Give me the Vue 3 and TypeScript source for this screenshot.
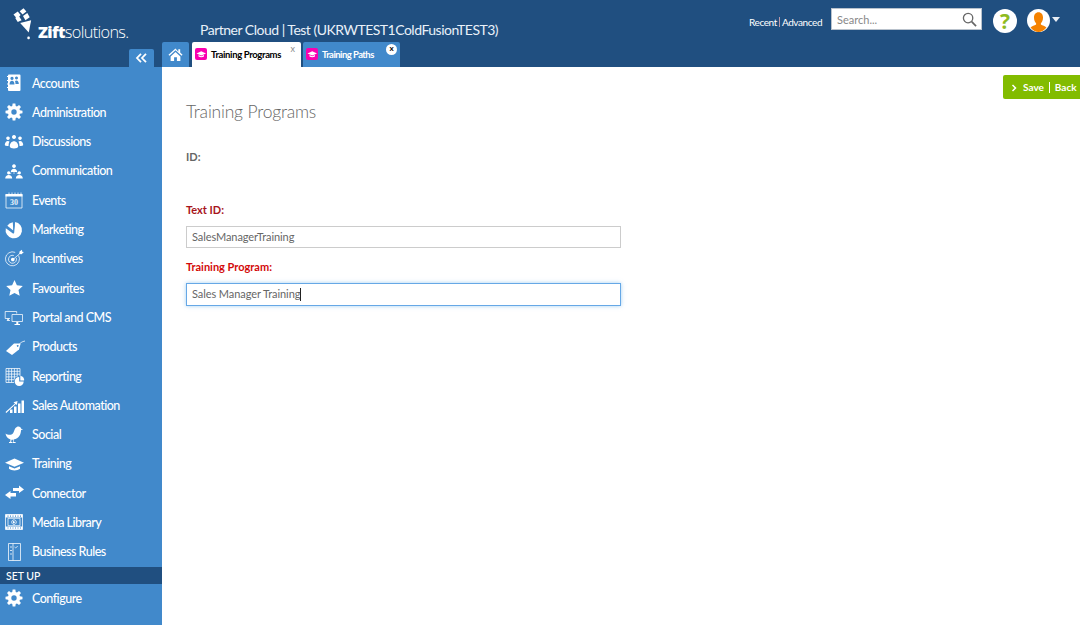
<script setup lang="ts">
interface Icon { u?: string[]; f?: string[]; s?: string[]; b?: string[]; t?: string }

function gear(cx = 10, cy = 10, ro = 8.6, ri = 6.2, hole = 2.7, n = 8): string {
  let d = ''
  const step = (Math.PI * 2) / n
  for (let i = 0; i < n; i++) {
    const a = i * step - Math.PI / 2
    const pts: [number, number][] = [
      [ri, a - step * 0.36], [ro, a - step * 0.2], [ro, a + step * 0.2], [ri, a + step * 0.36],
    ]
    pts.forEach(([r, t], k) => {
      const x = (cx + r * Math.cos(t)).toFixed(2)
      const y = (cy + r * Math.sin(t)).toFixed(2)
      d += (i === 0 && k === 0 ? 'M' : 'L') + x + ' ' + y + ' '
    })
  }
  d += `Z M${cx - hole} ${cy} a${hole} ${hole} 0 1 0 ${hole * 2} 0 a${hole} ${hole} 0 1 0 ${-hole * 2} 0 Z`
  return d
}

const icons: Record<string, Icon> = {
  accounts: {
    f: ['M5 1.500h10.500a1 1 0 0 1 1 1v14.500a1 1 0 0 1-1 1H5a1 1 0 0 1-1-1v-2H3v-1h1v-2.500H3v-1h1V8H3V7h1V4H3V3h1v-.5a1 1 0 0 1 1-1z'],
    b: ['M8 7a1.600 1.600 0 1 1 .01 0zM5.500 11.500c0-2 1-3.700 2.500-3.700s2.500 1.700 2.500 3.700zM12.500 6.500a1.500 1.500 0 1 1 .01 0zM11 8c.4-.3 1-.5 1.500-.5 1.300 0 2.300 1.500 2.300 3.500h-3.300c0-1-.1-2-.5-3z'],
  },
  gear: { f: [gear()] },
  discussions: {
    f: [
      'M10 7a2 2 0 1 1 .01 0zM5.800 14.500c0-3 1.800-5.200 4.200-5.200s4.200 2.200 4.200 5.200c0 1.300-1.900 2-4.200 2s-4.200-.7-4.200-2z',
      'M4 8a1.800 1.800 0 1 1 .01 0zM16 8a1.800 1.800 0 1 1 .01 0z',
      'M.8 13c0-2.200 1.300-4 3.100-4 .6 0 1.100.2 1.600.6C4.800 10.800 4.500 12.300 4.500 14c-2 0-3.700-.3-3.700-1zM19.200 13c0-2.200-1.300-4-3.100-4-.6 0-1.100.2-1.600.6.7 1.200 1 2.700 1 4.400 2 0 3.700-.3 3.700-1z',
    ],
  },
  communication: {
    f: [
      'M10 7a1.900 1.900 0 1 1 .01 0zM6.800 11c0-2 1.400-3.300 3.200-3.300s3.200 1.300 3.200 3.300z',
      'M4.700 13.500a1.600 1.600 0 1 1 .01 0zM1.200 17.500c0-2 1.500-3.400 3.500-3.400s3.500 1.400 3.500 3.400z',
      'M15.300 13.500a1.600 1.600 0 1 1 .01 0zM11.800 17.500c0-2 1.500-3.400 3.500-3.400s3.500 1.400 3.500 3.400z',
      'M9.700 11h.6v2h-.6zM6 12.500l1-1 .5.5-1 1zM14 12.500l-1-1-.5.5 1 1z',
    ],
  },
  events: {
    s: ['M2 4.500h16v13.500h-16z', 'M5 2.500v2M8 2.500v2M11 2.500v2M14 2.500v2M17 2.500v2'],
    f: ['M1.500 4h17v2.500h-17z'],
    b: ['M3.500 7.500h13v9h-13z'],
    t: '30',
  },
  marketing: {
    f: ['M8.800 2.300 5.500 3.500 3.300 5.700l6 4.800zM11 2a8.200 8.200 0 1 1-9.200 6.300l7.500 5.500.9-1.100z'],
    b: ['M9 12.500l1.500-10.500h.6l-1.500 11z'],
  },
  incentives: {
    s: ['M14.600 6.500a7 7 0 1 1-3.400-3.100', 'M12.200 8.800a4 4 0 1 1-2.400-2.300', 'M9 10.500 17 3.500'],
    f: ['M8.800 8.700a1.800 1.800 0 1 0 .01 0zM15.500 2.500 18 .8l.2 2 1.700.3-2.300 2.200-2.300-.3z'],
  },
  star: { f: ['M10.500 2l2.400 5.300 5.900.7-4.300 4 1.200 5.800-5.200-2.900-5.200 2.900 1.200-5.800-4.300-4 5.900-.7z'] },
  portal: {
    s: ['M1.200 4.500h11.500v2M1.200 4.500v7H6', 'M8 7.500h10.500v7H8z', 'M2.800 13.500h3.200'],
    f: ['M12.300 15h2v2h-2zM10.500 17h5.500v1h-5.500z', 'M3.300 11.500h1.500v2H3.300z'],
  },
  products: {
    f: ['M10 6.500h6l.5.5-1.500 5.500-7 5.500L2 14z'],
    b: ['M13.700 8a.9.9 0 1 1-.01 0z'],
    s: ['M14 8.500C16 6 18 4.500 21 4'],
  },
  reporting: {
    s: ['M2 2.500h14v14H2zM2 5.300h14M2 8.100h14M2 10.900h14M2 13.700h14M4.800 2.500v14M7.600 2.500v14M10.400 2.500v14M13.200 2.500v14'],
    u: ['M15.500 10a5.500 5.500 0 1 0 .01 0z'],
    f: ['M15.200 11a4.500 4.500 0 1 0 4.500 4.500h-4.500z', 'M16.300 10a3.800 3.800 0 0 1 3.800 4.600h-3.800z'],
  },
  sales: {
    f: ['M6 14.500h2.500V18H6zM10 11.500h2.500V18H10zM14 8.500h2.500V18H14zM17.500 5.500h2.500V18h-2.500z', 'M1.500 17 11 8.500 9.500 7.300 13.500 6l-.6 4-1.100-1L2.300 18z'],
  },
  social: {
    f: ['M14.500 1.500c1.400 0 2.500 1 2.600 2.200l2 .6-2 .8c-.3 4.300-2 8.500-7.500 9.500l.5 2.400h1.500v1H8v-1h1.500L9 14.700H7.500l-.3 2.300h1.300v1H5v-1h1.200l.3-2.400C3.500 13.500 2 11.300 1.500 8.500c2.500 1.800 5 1.500 6.500.8 2-1 2.500-5.300 3.500-6.200.8-.9 1.800-1.600 3-1.600z'],
  },
  training: {
    f: ['M10.500 4.500 1 8.800l9.500 4 9.500-4z', 'M5 12.200v2.600c1.500 1.100 3.500 1.600 5.500 1.600s4-.5 5.500-1.600v-2.600l-5.500 2.300z'],
  },
  connector: {
    f: ['M9 5h6V2.500L20 6.500 15 10V8H9z', 'M12 10H6.500V8L1 12l5.500 4v-2.600H12z'],
  },
  media: {
    s: ['M1.500 2.500h17v15h-17z', 'M4 6.300h12v7.400H4z', 'M10 7.800a2.300 2.300 0 1 0 .01 0z'],
    f: ['M1.500 2.500h17v3h-17zM1.500 14.500h17v3h-17z', 'M9 8.800l2.500 1.400L9 11.500z'],
    b: ['M3.500 3.500h1v1.200h-1zM6 3.500h1v1.200H6zM8.500 3.500h1v1.200h-1zM11 3.500h1v1.200h-1zM13.500 3.500h1v1.200h-1zM16 3.500h1v1.200h-1zM3.500 15.400h1v1.200h-1zM6 15.400h1v1.200H6zM8.500 15.400h1v1.200h-1zM11 15.400h1v1.200h-1zM13.500 15.400h1v1.200h-1zM16 15.400h1v1.200h-1z'],
  },
  rules: {
    s: ['M4.500 1.500h12v17h-12z', 'M9 1.500v17', 'M6 5h2M6 8.500h2M6 12h2M10.500 5l1.200 1 2-2'],
  },
}

const items = [
  { label: 'Accounts', icon: 'accounts' },
  { label: 'Administration', icon: 'gear' },
  { label: 'Discussions', icon: 'discussions' },
  { label: 'Communication', icon: 'communication' },
  { label: 'Events', icon: 'events' },
  { label: 'Marketing', icon: 'marketing' },
  { label: 'Incentives', icon: 'incentives' },
  { label: 'Favourites', icon: 'star' },
  { label: 'Portal and CMS', icon: 'portal' },
  { label: 'Products', icon: 'products' },
  { label: 'Reporting', icon: 'reporting' },
  { label: 'Sales Automation', icon: 'sales' },
  { label: 'Social', icon: 'social' },
  { label: 'Training', icon: 'training' },
  { label: 'Connector', icon: 'connector' },
  { label: 'Media Library', icon: 'media' },
  { label: 'Business Rules', icon: 'rules' },
]
const capPath = icons.training.f!
</script>

<template>
  <div class="app">
    <header class="header">
      <div class="brand">
        <div class="logo">
          <svg class="logo-mark" viewBox="0 0 22 34" aria-hidden="true">
            <path d="M7.500 15.500 19 12.500 16.500 25.500z" fill="#fff" />
            <path d="M0.500 6.500 5 3.500 8 7 6.500 8.500 9 12.500 5 14.500 2.500 10.500 3 9.500z" fill="#fff" />
            <path d="M7 3 11 0 14 3.500 10 6.500z" fill="#fff" />
            <path d="M10.500 8 15 5 17.500 9.500 13 12.500z" fill="#fff" />
            <rect x="15" y="29.500" width="2.600" height="3" rx="1" fill="#fff" />
          </svg>
          <div class="logo-word"><b>Zift</b><span>solutions.</span></div>
        </div>
        <button class="collapse" aria-label="Collapse">
          <svg viewBox="0 0 12 10"><path d="M5.500 .8 1.500 5l4 4.200M10.500 .8 6.500 5l4 4.200" fill="none" stroke="#fff" stroke-width="1.800" /></svg>
        </button>
      </div>
      <div class="head-main">
        <div class="head-top">
          <div class="title">Partner Cloud | Test (UKRWTEST1ColdFusionTEST3)</div>
          <nav class="quick"><span>Recent</span><i></i><span>Advanced</span></nav>
          <div class="search">
            <span>Search...</span>
            <svg viewBox="0 0 16 16"><circle cx="6.500" cy="6.500" r="5" fill="none" stroke="#666" stroke-width="1.400" /><path d="M10.300 10.300 15 15" stroke="#666" stroke-width="1.800" /></svg>
          </div>
          <div class="help">?</div>
          <div class="avatar">
            <svg viewBox="0 0 24 24"><path d="M12 3.500c3 0 4.700 2.400 4.700 5.500 0 2.500-1 4.500-2.200 5.800v1.400c1.800 1 4 1.500 5.800 3C18.300 22 15.300 24 12 24s-6.300-2-8.300-4.800c1.800-1.500 4-2 5.800-3v-1.400C8.300 13.500 7.300 11.500 7.300 9c0-3.100 1.700-5.500 4.700-5.500z" fill="#f58200" /></svg>
          </div>
          <span class="caret-down"></span>
        </div>
        <div class="tabs">
          <div class="tab home">
            <svg viewBox="0 0 16 16"><path d="M8 1.500 0.500 8.200l1 1L8 3.500l6.500 5.700 1-1-2.500-2.300V2.500h-2v2.500zM2.800 10 8 5.300l5.200 4.700v5h-3.700v-4h-3v4H2.800z" fill="#fff" /></svg>
          </div>
          <div class="tab active">
            <span class="badge"><svg viewBox="0 0 20 20"><path v-for="d in capPath" :key="d" :d="d" fill="#fff" /></svg></span>
            <span class="tab-text">Training Programs</span>
            <span class="x">x</span>
          </div>
          <div class="tab other">
            <span class="badge"><svg viewBox="0 0 20 20"><path v-for="d in capPath" :key="d" :d="d" fill="#fff" /></svg></span>
            <span class="tab-text">Training Paths</span>
            <span class="x-round">x</span>
          </div>
        </div>
      </div>
    </header>

    <div class="body">
      <aside class="side">
        <ul class="menu">
          <li v-for="item in items" :key="item.label" class="row">
            <svg class="ico" viewBox="0 0 20 20" aria-hidden="true">
              <path v-for="d in icons[item.icon].s || []" :key="d" :d="d" class="st" />
              <path v-for="d in icons[item.icon].u || []" :key="d" :d="d" class="bl" />
              <path v-for="d in icons[item.icon].f || []" :key="d" :d="d" class="fl" fill-rule="evenodd" />
              <path v-for="d in icons[item.icon].b || []" :key="d" :d="d" class="bl" />
              <text v-if="icons[item.icon].t" x="10" y="15.200" text-anchor="middle" class="ico-text">{{ icons[item.icon].t }}</text>
            </svg>
            <span>{{ item.label }}</span>
          </li>
        </ul>
        <div class="setup">SET UP</div>
        <div class="row">
          <svg class="ico" viewBox="0 0 20 20" aria-hidden="true"><path :d="icons.gear.f![0]" class="fl" fill-rule="evenodd" /></svg>
          <span>Configure</span>
        </div>
      </aside>

      <main class="main">
        <div class="toolbar">
          <div class="save">
            <svg viewBox="0 0 6 8"><path d="M1.500 1 4.500 4 1.500 7" fill="none" stroke="#fff" stroke-width="1.500" /></svg>
            <span>Save</span><i></i><span>Back</span>
          </div>
        </div>
        <h1 class="heading">Training Programs</h1>
        <div class="label id">ID:</div>
        <div class="label textid">Text ID:</div>
        <div class="field">SalesManagerTraining</div>
        <div class="label prog">Training Program:</div>
        <div class="field focus">Sales Manager Training<span class="cursor"></span></div>
      </main>
    </div>
  </div>
</template>

<style>
html, body { margin: 0; padding: 0; background: #fff; }
</style>

<style scoped>
* { box-sizing: border-box; }
.app {
  width: 1080px;
  height: 625px;
  overflow: hidden;
  display: flex;
  flex-direction: column;
  font-family: Lato, "Noto Sans", sans-serif;
  color: #666;
}
.header {
  height: 67px;
  background: #204f80;
  display: flex;
  flex: none;
}
.brand { width: 162px; flex: none; position: relative; }
.logo { display: flex; padding: 8px 0 0 13px; height: 49px; }
.logo-mark { width: 21px; height: 33px; flex: none; }
.logo-word { margin: 15px 0 0 4px; color: #fff; font-size: 16.300px; line-height: 18px; letter-spacing: -.65px; font-family: "Open Sans", sans-serif; white-space: nowrap; }
.logo-word b { font-weight: 800; }
.logo-word span { font-weight: 300; }
.collapse {
  display: block; margin-left: 129px; width: 25px; height: 18px; padding: 4px 6px;
  background: #4189cb; border: 0; border-radius: 2px 2px 0 0;
}
.collapse svg { display: block; width: 13px; height: 10px; }
.head-main { flex: 1; display: flex; flex-direction: column; }
.head-top { height: 42px; display: flex; align-items: flex-start; }
.title { margin: 21px 0 0 38px; width: 549px; color: #e9f1f9; font-size: 14px; letter-spacing: -.5px; line-height: 18px; font-weight: 400; white-space: nowrap; }
.quick { margin-top: 15px; width: 82px; display: flex; align-items: center; color: #fff; font-size: 10px; letter-spacing: -.4px; line-height: 14px; white-space: nowrap; }
.quick i { width: 1px; height: 10px; background: #b9a; margin: 0 2px; }
.search {
  margin-top: 8px; width: 151px; height: 22px; background: #fff; border: 1px solid #b9c2cc;
  display: flex; align-items: center; justify-content: space-between; padding: 0 4px 0 5px;
  color: #888; font-size: 11px;
}
.search svg { width: 15px; height: 15px; }
.help {
  margin: 9px 0 0 11px; width: 24px; height: 24px; border-radius: 50%; background: #fff; color: #8fbb1f;
  font: 700 21px/24px "Open Sans", sans-serif; text-align: center;
}
.avatar { margin: 9px 0 0 10px; width: 23px; height: 23px; border-radius: 50%; background: #fff; overflow: hidden; }
.avatar svg { display: block; width: 23px; height: 23px; }
.caret-down { margin: 17px 0 0 2px; border: 4px solid transparent; border-top: 5px solid #e8eef5; border-bottom: 0; }
.tabs { height: 25px; display: flex; align-items: stretch; }
.tab { display: flex; align-items: center; border-radius: 2px 2px 0 0; position: relative; }
.home { width: 27px; background: #4189cb; justify-content: center; margin-right: 3px; }
.home svg { width: 15px; height: 15px; }
.active { width: 109px; background: #fff; margin-right: 2px; padding-left: 3px; color: #000; }
.other { width: 97px; background: #4189cb; padding-left: 3px; color: #fff; }
.badge { width: 12px; height: 12px; background: #f900b0; border-radius: 2px; flex: none; display: flex; align-items: center; justify-content: center; margin-top: -1px; }
.badge svg { width: 10px; height: 10px; display: block; }
.tab-text { margin-left: 4px; font-size: 9.500px; font-weight: 700; letter-spacing: -.35px; white-space: nowrap; }
.other .tab-text { letter-spacing: -.55px; }
.x { position: absolute; top: 1px; right: 6px; color: #888; font-size: 9px; line-height: 12px; }
.x-round { position: absolute; top: 2px; right: 3px; width: 11px; height: 11px; border-radius: 50%; background: #fff; color: #000; font-size: 8px; font-weight: 700; line-height: 9px; text-align: center; }
.body { flex: 1; display: flex; min-height: 0; }
.side { width: 162px; flex: none; background: #4189cb; color: #fff; font-size: 12.500px; font-weight: 500; letter-spacing: -.5px; }
.menu { list-style: none; margin: 0 0 .4px; padding: 1.400px 0 0; }
.row { height: 29.300px; display: flex; align-items: center; padding-left: 4px; white-space: nowrap; }
.ico { width: 20px; height: 20px; margin-right: 8px; flex: none; overflow: visible; }
.fl { fill: #fff; }
.bl { fill: #4189cb; }
.st { fill: none; stroke: #fff; stroke-width: 1; opacity: .75; }
.ico-text { font: 700 8px "Liberation Serif", serif; fill: #e8f1fa; letter-spacing: 0; }
.setup { height: 17px; background: #204f80; font-size: 10.500px; letter-spacing: 0; line-height: 18px; padding-left: 6px; }
.main { flex: 1; padding: 8px 0 0 24px; }
.toolbar { display: flex; justify-content: flex-end; height: 24px; }
.save {
  width: 77px; background: #82bc00; border-radius: 2px 0 0 2px; color: #fff; font-size: 10px; font-weight: 700;
  display: flex; align-items: center; padding: 0 0 0 8px; height: 24px; flex: none;
}
.save svg { width: 6px; height: 8px; margin-right: 6px; margin-top: 2px; flex: none; }
.save span { line-height: 14px; }
.save i { width: 1px; height: 11px; background: #fff; margin: 0 5px; flex: none; }
.heading { margin: 2px 0 0; font-size: 17.500px; letter-spacing: -.2px; line-height: 22px; font-weight: 300; color: #666; }
.label { font-size: 11px; font-weight: 700; line-height: 14px; white-space: nowrap; }
.id { margin-top: 27px; }
.textid { margin-top: 39px; color: #a8151c; }
.prog { margin-top: 12px; color: #d30a0a; }
.field {
  width: 435px; height: 22px; border: 1px solid #ccc; margin-top: 9px; padding-left: 5px;
  font-size: 11px; letter-spacing: -.08px; line-height: 20px; color: #666; white-space: nowrap;
}
.focus { height: 23px; border-color: #66a8e6; box-shadow: 0 0 4px rgba(102, 175, 233, .6); }
.cursor { display: inline-block; width: 1px; height: 13px; background: #222; vertical-align: -3px; }
</style>
